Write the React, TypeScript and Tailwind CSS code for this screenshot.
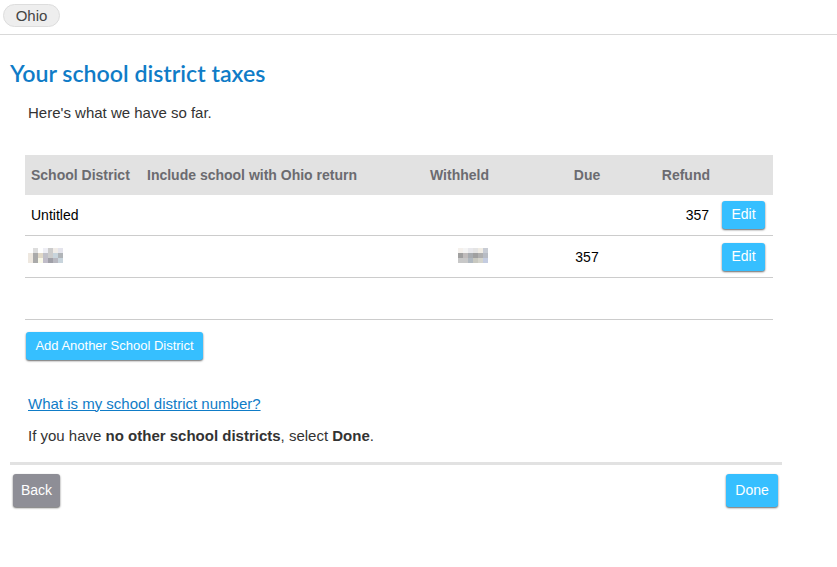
const leftBlur = [
  ["#ffffff", "#dddddd", "#ffffff", "#eeeef4", "#cccccc", "#f0ece8", "#e4e4ec"],
  ["#eee8e0", "#aaaaaa", "#e0d8c8", "#c0c0c8", "#cccccc", "#c8d4dc", "#b0b4b8"],
  ["#eee8e0", "#aaaaaa", "#f8f8e8", "#c0bcc8", "#a0a0a8", "#b8b8c0", "#c8d4dc"],
];

const rightBlur = [
  ["#f4f0ec", "#f4f4f4", "#e8e8ec", "#e4e4e4", "#f0ece4", "#c8ccd4"],
  ["#a0a0a0", "#c0bcbc", "#a8acb0", "#a0a0a0", "#b0b0b0", "#b8bcc4"],
  ["#c8c8c8", "#c8c8c8", "#b0b8c0", "#c8c8c0", "#d4d4cc", "#c4cce0"],
];

// pixelated patch that hides a value in the picture
function Blur({ cells }: { cells: string[][] }) {
  return (
    <svg width={cells[0].length * 5} height={15} className="block" shapeRendering="crispEdges">
      {cells.map((row, y) =>
        row.map((fill, x) => <rect key={`${x}-${y}`} x={x * 5} y={y * 5} width={5} height={5} fill={fill} />)
      )}
    </svg>
  );
}

function EditButton() {
  return (
    <button className="block w-[43px] h-[28px] rounded-[3px] bg-[#36bfff] text-white text-[14px] shadow-[0_1px_2px_rgba(0,0,0,0.6)]">
      Edit
    </button>
  );
}

export default function App() {
  return (
    <div className="min-h-[567px] bg-white font-['Liberation_Sans',Arial,sans-serif] text-[#333333] text-[15px]">
      {/* State tab */}
      <div className="h-[35px] border-b border-[#d9d9d9] pt-1 pl-[3px]">
        <div className="w-[57px] h-[23px] rounded-full bg-[#eeeeee] border border-[#dddddd] text-center leading-[21px] text-[#444444] text-[15px]">
          Ohio
        </div>
      </div>

      <div className="w-[772px] ml-[10px]">
        <h1 className="mt-[23px] h-[30px] leading-[30px] font-['Lato',sans-serif] font-semibold text-[23.2px] text-[#0f7cc7]">
          Your school district taxes
        </h1>
        <p className="mt-[15px] ml-[18px] leading-[20px]">Here's what we have so far.</p>

        <table className="mt-[32px] ml-[15px] w-[748px] table-fixed border-collapse text-[14px] text-black">
          <colgroup>
            <col className="w-[116px]" />
            <col className="w-[239px]" />
            <col className="w-[116px]" />
            <col className="w-[130px]" />
            <col className="w-[90px]" />
            <col className="w-[57px]" />
          </colgroup>
          <thead>
            <tr className="h-[40px] bg-[#e2e2e2] text-[#6b6b70] font-bold">
              <th className="px-[6px] pt-[1px] text-left whitespace-nowrap">School District</th>
              <th className="px-[6px] pt-[1px] text-left whitespace-nowrap">Include school with Ohio return</th>
              <th className="pl-[6px] pr-[7px] pt-[1px] text-right">Withheld</th>
              <th className="pl-[52px] pt-[1px] text-center">Due</th>
              <th className="px-[6px] pt-[1px] text-right">Refund</th>
              <th />
            </tr>
          </thead>
          <tbody>
            <tr className="h-[40px] border-b border-[#cccccc]">
              <td className="px-[6px] pt-[2px]">Untitled</td>
              <td />
              <td />
              <td />
              <td className="px-[7px] pt-[2px] text-right">357</td>
              <td className="pl-[6px]"><EditButton /></td>
            </tr>
            <tr className="h-[42px] border-b border-[#cccccc]">
              <td className="pl-[3px] pb-[2px]"><Blur cells={leftBlur} /></td>
              <td />
              <td className="pb-[2px]"><div className="flex justify-end pr-[8px]"><Blur cells={rightBlur} /></div></td>
              <td className="pl-[52px] pt-[2px] text-center">357</td>
              <td />
              <td className="pl-[6px] pt-[1px]"><EditButton /></td>
            </tr>
            <tr className="h-[42px] border-b border-[#cccccc]">
              <td colSpan={6} />
            </tr>
          </tbody>
        </table>

        <button className="block mt-[12px] ml-[16px] w-[177px] h-[28px] rounded-[3px] bg-[#36bfff] text-white text-[13px] shadow-[0_1px_2px_rgba(0,0,0,0.6)]">
          Add Another School District
        </button>

        <a href="#" className="block mt-[34px] ml-[18px] leading-[20px] text-[#0f7cc7] underline">
          What is my school district number?
        </a>
        <p className="mt-[12px] ml-[18px] leading-[20px]">
          If you have <b>no other school districts</b>, select <b>Done</b>.
        </p>

        {/* Footer buttons */}
        <div className="mt-[16px] border-t-[3px] border-[#e2e2e2] pt-[9px] pl-[3px] pr-[4px] flex justify-between">
          <button className="w-[47px] h-[33px] rounded-[3px] bg-[#8e8e96] text-white text-[14px] shadow-[0_1px_2px_rgba(0,0,0,0.6)]">
            Back
          </button>
          <button className="w-[52px] h-[33px] rounded-[3px] bg-[#36bfff] text-white text-[14px] shadow-[0_1px_2px_rgba(0,0,0,0.6)]">
            Done
          </button>
        </div>
      </div>
    </div>
  );
}
